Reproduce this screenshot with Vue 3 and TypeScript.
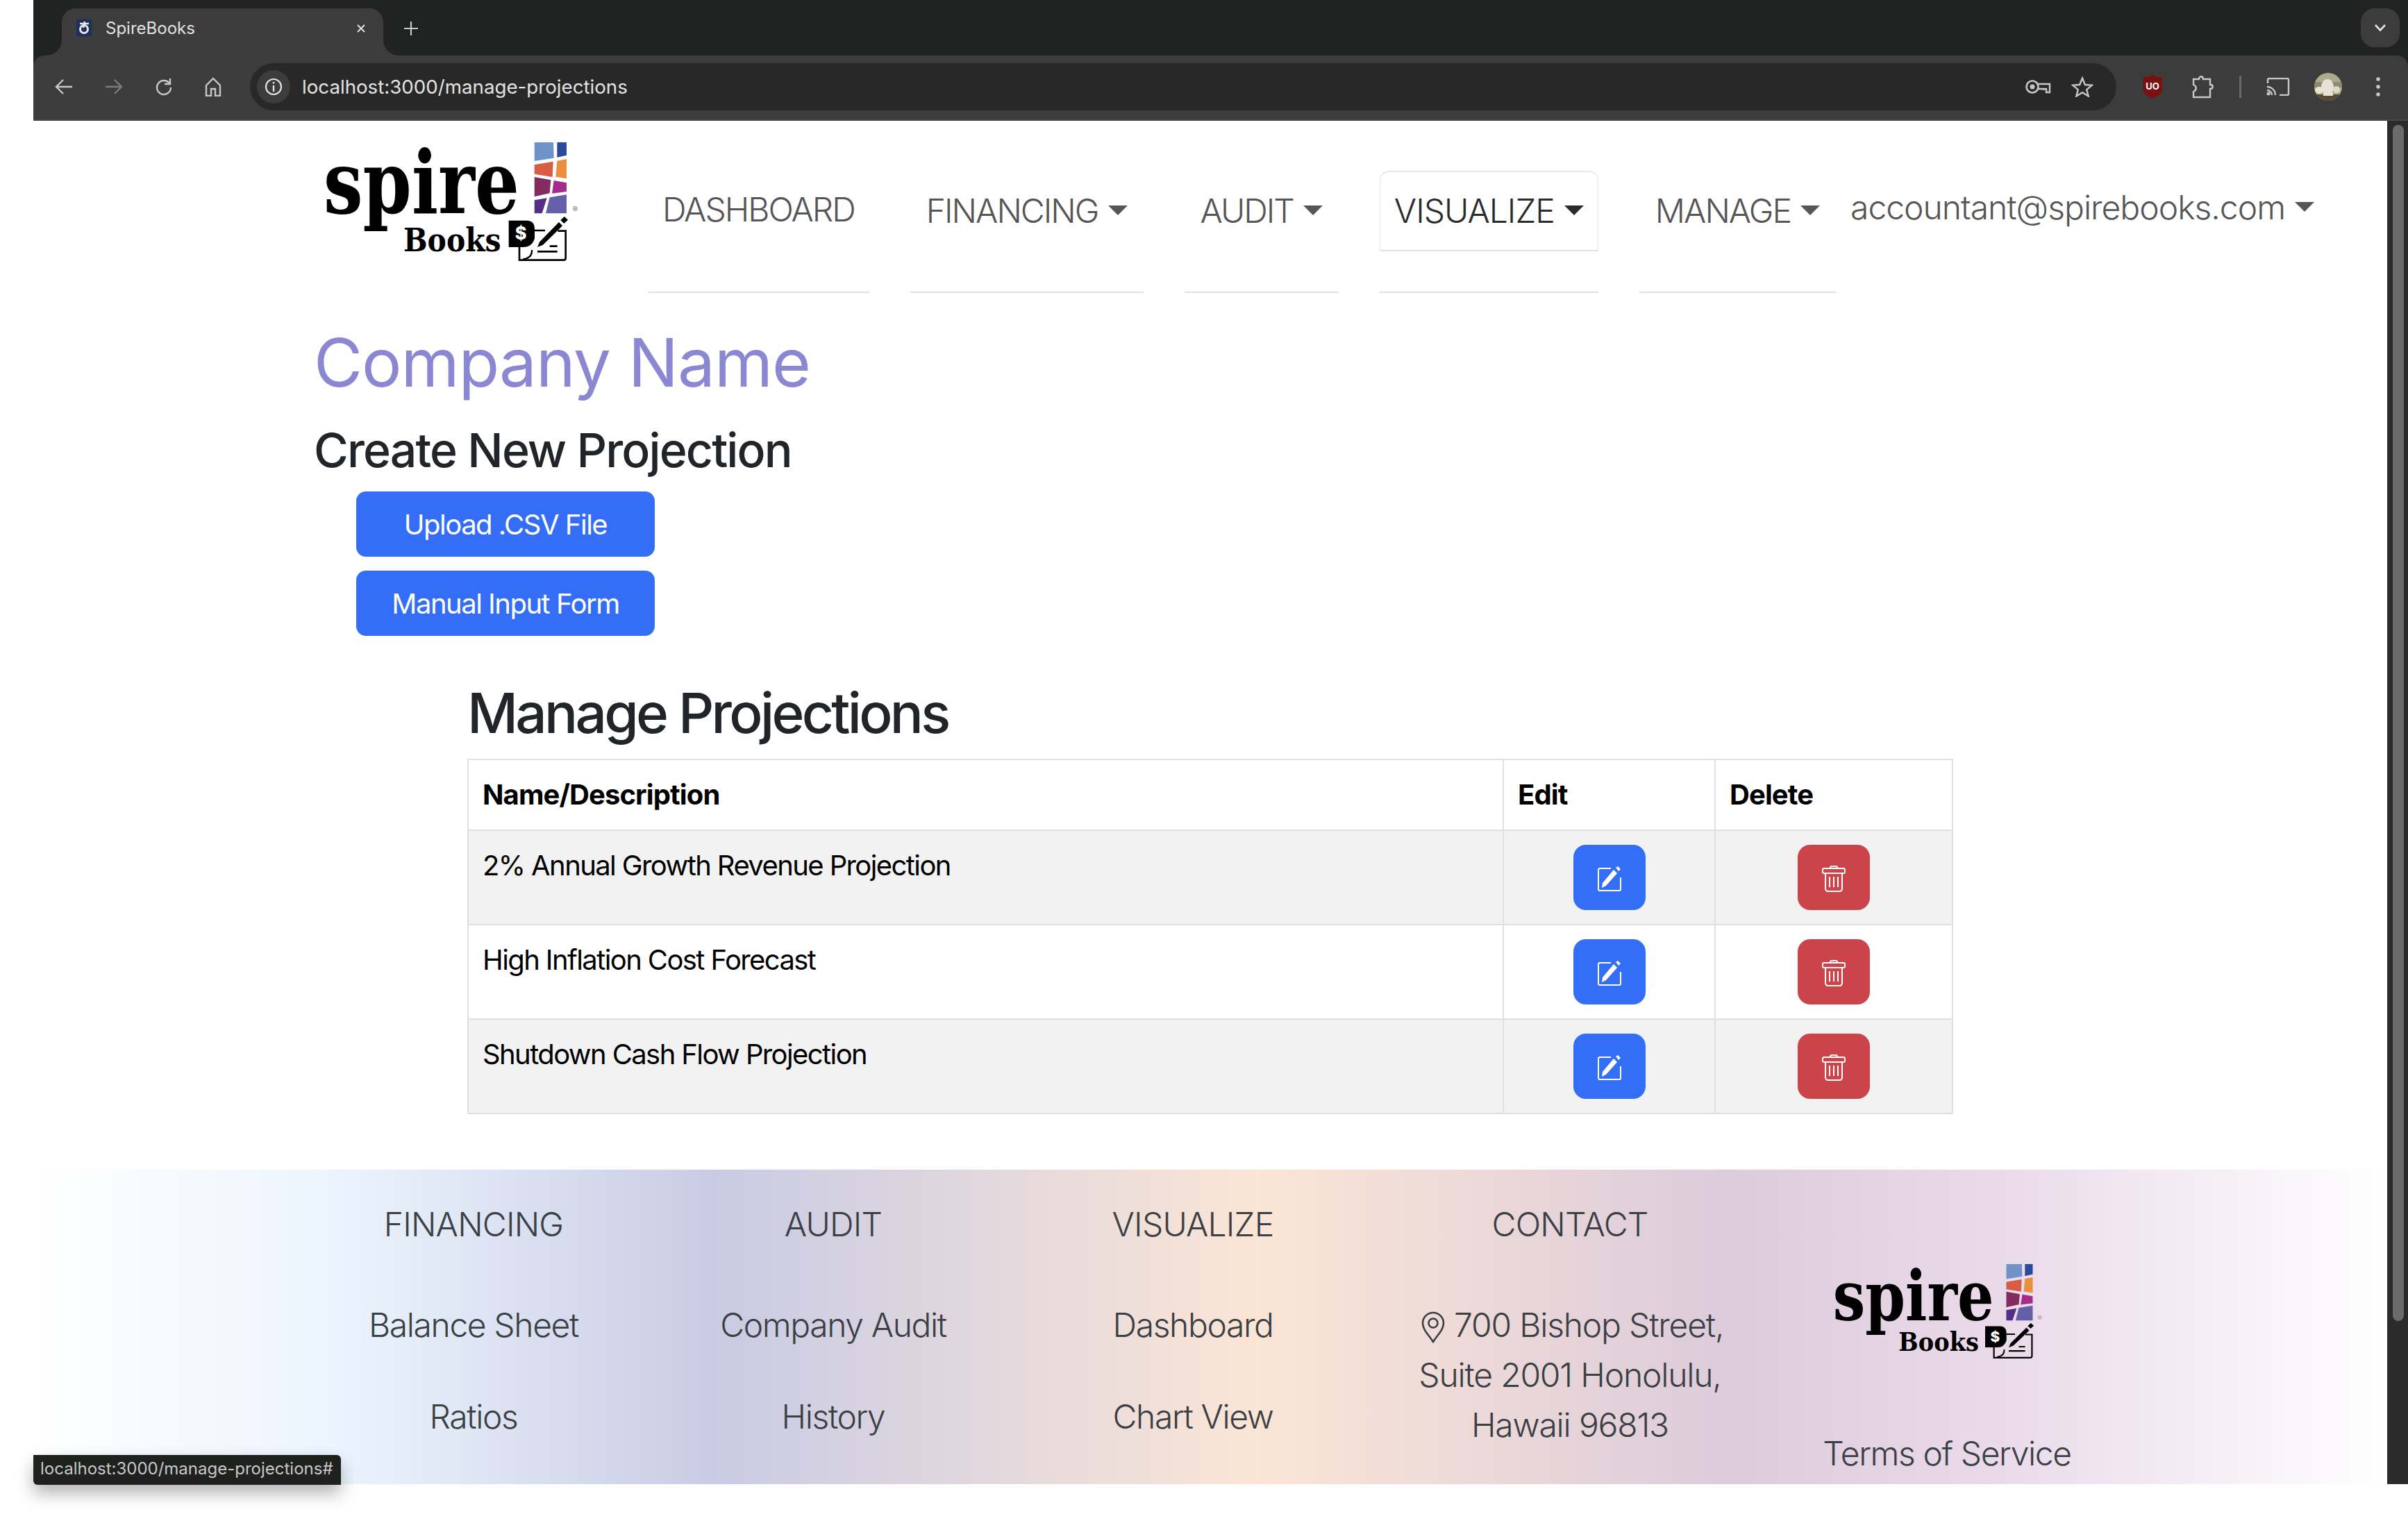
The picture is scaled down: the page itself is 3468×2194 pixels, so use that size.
<script setup lang="ts">

interface Tile {
    points: string
    fill: string
}

interface Projection {
    name: string
}

interface NavItem {
    label: string
    caret: boolean
    active: boolean
}

interface FooterCol {
    title: string
    links: string[]
}

const tiles : Tile[] = [
    { points: '1049,75 1131,75 1133,143 1049,156', fill: '#6f93c8' },
    { points: '1147,75 1188,75 1188,131 1147,140', fill: '#2b4a9e' },
    { points: '1049,172 1130,158 1127,225 1049,212', fill: '#d95c45' },
    { points: '1147,155 1188,148 1188,232 1141,224', fill: '#ea8f3d' },
    { points: '1049,225 1120,238 1115,295 1049,310', fill: '#832b60' },
    { points: '1133,240 1188,250 1188,288 1125,296', fill: '#a52c8c' },
    { points: '1049,325 1103,316 1082,382 1049,382', fill: '#562f82' },
    { points: '1115,313 1188,301 1188,382 1098,382', fill: '#6460a8' }
]

const navItems : NavItem[] = [
    { label: 'DASHBOARD', caret: false, active: false },
    { label: 'FINANCING', caret: true, active: false },
    { label: 'AUDIT', caret: true, active: false },
    { label: 'VISUALIZE', caret: true, active: true },
    { label: 'MANAGE', caret: true, active: false }
]

const projections : Projection[] = [
    { name: '2% Annual Growth Revenue Projection' },
    { name: 'High Inflation Cost Forecast' },
    { name: 'Shutdown Cash Flow Projection' }
]

const footerCols : FooterCol[] = [
    { title: 'FINANCING', links: ['Balance Sheet', 'Ratios'] },
    { title: 'AUDIT', links: ['Company Audit', 'History'] },
    { title: 'VISUALIZE', links: ['Dashboard', 'Chart View'] }
]

</script>

<template>
    <div class="screen">
        <div class="gutter"></div>
        <div class="browser">
            <div class="tabstrip">
                <div class="tab">
                    <svg class="favicon" width="22" height="24" viewBox="0 0 22 24">
                        <rect width="22" height="24" fill="#1d2f5e" />
                        <circle cx="11" cy="14" r="5.5" fill="none" stroke="#e8e8e8" stroke-width="3" />
                        <path d="M5 6 H18 M12 3 L10 12" stroke="#e8e8e8" stroke-width="2.5" fill="none" />
                    </svg>
                    <span class="tab-title">SpireBooks</span>
                    <svg class="tab-close" width="16" height="16" viewBox="0 0 16 16">
                        <path d="M3 3 L13 13 M13 3 L3 13" stroke="#e3e3e3" stroke-width="2" />
                    </svg>
                </div>
                <svg class="new-tab" width="22" height="22" viewBox="0 0 22 22">
                    <path d="M11 1 V21 M1 11 H21" stroke="#c7c7c7" stroke-width="2.2" />
                </svg>
                <div class="tab-menu">
                    <svg width="18" height="12" viewBox="0 0 18 12">
                        <path d="M2 2 L9 9.5 L16 2" stroke="#e3e3e3" stroke-width="2.6" fill="none" />
                    </svg>
                </div>
            </div>

            <div class="toolbar">
                <div class="nav-icons">
                    <svg width="26" height="24" viewBox="0 0 26 24">
                        <path d="M25 12 H3 M12 2 L2 12 L12 22" stroke="#c7c7c7" stroke-width="2.4" fill="none" />
                    </svg>
                    <svg width="26" height="24" viewBox="0 0 26 24">
                        <path d="M1 12 H23 M14 2 L24 12 L14 22" stroke="#7c7c7c" stroke-width="2.4" fill="none" />
                    </svg>
                    <svg width="26" height="26" viewBox="0 0 26 26">
                        <path d="M21 8 A10 10 0 1 0 23 14" stroke="#c7c7c7" stroke-width="2.4" fill="none" />
                        <path d="M22 1 V9 H14" stroke="#c7c7c7" stroke-width="2.4" fill="none" />
                    </svg>
                    <svg width="24" height="28" viewBox="0 0 24 28">
                        <path d="M2 12 L12 2 L22 12 V27 H15 V17 H9 V27 H2 Z" stroke="#c7c7c7" stroke-width="2.4" fill="none" />
                    </svg>
                </div>
                <div class="omnibox">
                    <div class="info-badge">
                        <svg width="26" height="26" viewBox="0 0 26 26">
                            <circle cx="13" cy="13" r="11" stroke="#e3e3e3" stroke-width="2.2" fill="none" />
                            <path d="M13 11 V20 M13 6 V8.5" stroke="#e3e3e3" stroke-width="2.4" />
                        </svg>
                    </div>
                    <span class="url">localhost:3000/manage-projections</span>
                    <svg class="omni-key" width="38" height="22" viewBox="0 0 38 22">
                        <circle cx="11" cy="11" r="8.5" stroke="#c7c7c7" stroke-width="2.6" fill="none" />
                        <circle cx="11" cy="11" r="3.5" fill="#c7c7c7" />
                        <path d="M19 7 H36 V19 H31 V14 H27 V16 M19 14 H27" stroke="#c7c7c7" stroke-width="2.4" fill="none" />
                    </svg>
                    <svg class="omni-star" width="32" height="30" viewBox="0 0 32 30">
                        <path d="M16 2.5 L19.8 12 L30 12.7 L22.2 19.2 L24.7 28.5 L16 23.2 L7.3 28.5 L9.8 19.2 L2 12.7 L12.2 12 Z" stroke="#c7c7c7" stroke-width="2.4" fill="none" />
                    </svg>
                </div>
                <div class="ext-icons">
                    <svg class="ext-ublock" width="30" height="34" viewBox="0 0 30 34">
                        <path d="M15 0 L22 3 L29 3 V20 C29 27 20 32 15 34 C10 32 1 27 1 20 V3 L8 3 Z" fill="#7a1010" />
                        <text x="15" y="21" text-anchor="middle" class="ublock-text">UO</text>
                    </svg>
                    <svg class="ext-puzzle" width="32" height="34" viewBox="0 0 32 34">
                        <path d="M3 6 H11 C11 1 17 1 17 6 H27 V14 C32 14 32 20 27 20 V32 H3 V24 C8 22 8 16 3 14 Z" stroke="#c7c7c7" stroke-width="2.4" fill="none" />
                    </svg>
                    <div class="ext-sep"></div>
                    <svg class="ext-cast" width="34" height="26" viewBox="0 0 34 26">
                        <path d="M2 8 V3 Q2 1 4 1 H30 Q32 1 32 3 V23 Q32 25 30 25 H19" stroke="#c7c7c7" stroke-width="2.4" fill="none" />
                        <path d="M1 13 A12 12 0 0 1 13 25 M1 18 A7 7 0 0 1 8 25" stroke="#c7c7c7" stroke-width="2.4" fill="none" />
                        <circle cx="3" cy="23" r="2.5" fill="#c7c7c7" />
                    </svg>
                    <svg class="ext-avatar" width="40" height="40" viewBox="0 0 40 40">
                        <clipPath id="avatar-clip"><circle cx="20" cy="20" r="20" /></clipPath>
                        <g clip-path="url(#avatar-clip)">
                            <rect width="40" height="40" fill="#aeaa8e" />
                            <rect y="13" width="40" height="8" fill="#8f8a6c" />
                            <rect y="31" width="40" height="9" fill="#5c4a33" />
                            <ellipse cx="19" cy="20" rx="9" ry="11" fill="#e6e3d6" />
                            <ellipse cx="7" cy="25" rx="6" ry="5" fill="#e6e3d6" />
                            <ellipse cx="32" cy="24" rx="5" ry="5" fill="#dcd9ca" />
                            <rect x="13" y="28" width="14" height="5" fill="#e6e3d6" />
                        </g>
                    </svg>
                    <svg class="ext-kebab" width="8" height="30" viewBox="0 0 8 30">
                        <circle cx="4" cy="4" r="2.8" fill="#c7c7c7" />
                        <circle cx="4" cy="15" r="2.8" fill="#c7c7c7" />
                        <circle cx="4" cy="26" r="2.8" fill="#c7c7c7" />
                    </svg>
                </div>
            </div>

            <div class="viewport">
                <div class="page">
                    <header class="site-header">
                        <svg class="logo" viewBox="0 0 1500 720" preserveAspectRatio="none">
                            <polygon v-for="t in tiles" :key="t.points" :points="t.points" :fill="t.fill" />
                            <text x="1225" y="379" text-anchor="middle" class="logo-reg">®</text>
                            <text x="138" y="380" textLength="846" lengthAdjust="spacingAndGlyphs" class="logo-spire">spire</text>
                            <text x="483" y="547" textLength="422" lengthAdjust="spacingAndGlyphs" class="logo-books">Books</text>
                            <path d="M938 413 H1015 Q1050 413 1050 450 V490 Q1040 528 1000 528 H938 Z" fill="#000" />
                            <text x="990" y="496" text-anchor="middle" class="logo-dollar">$</text>
                            <path d="M984 528 V584 H1175 Q1184 584 1184 575 V458 H1150 M1050 456 H1095" stroke="#000" stroke-width="8" fill="none" />
                            <path d="M1000 580 Q1040 575 1038 540" stroke="#000" stroke-width="7" fill="none" />
                            <path d="M1062 547 H1148 M1115 524 H1148" stroke="#000" stroke-width="8" fill="none" />
                            <path d="M1062 528 L1072 505 L1155 420 L1170 436 L1086 518 Z" fill="#000" />
                            <path d="M1162 412 L1178 396 L1194 410 L1177 426 Z" fill="#000" />
                        </svg>
                        <nav class="main-nav">
                            <div v-for="item in navItems" :key="item.label" class="nav-item">
                                <a href="#" :class="{ 'nav-link': true, active: item.active, plain: !item.caret }">
                                    {{ item.label }}<span v-if="item.caret" class="caret"></span>
                                </a>
                            </div>
                            <a href="#" class="user-link">accountant@spirebooks.com<span class="caret"></span></a>
                        </nav>
                    </header>

                    <section class="create">
                        <h1>Company Name</h1>
                        <h3>Create New Projection</h3>
                        <button class="btn-main">Upload .CSV File</button>
                        <button class="btn-main">Manual Input Form</button>
                    </section>

                    <section class="manage">
                        <h2>Manage Projections</h2>
                        <table>
                            <colgroup>
                                <col class="col-name" />
                                <col class="col-edit" />
                                <col class="col-delete" />
                            </colgroup>
                            <thead>
                                <tr>
                                    <th>Name/Description</th>
                                    <th>Edit</th>
                                    <th>Delete</th>
                                </tr>
                            </thead>
                            <tbody>
                                <tr v-for="p in projections" :key="p.name">
                                    <td>{{ p.name }}</td>
                                    <td class="action">
                                        <button class="btn-icon btn-edit">
                                            <svg width="36" height="38" viewBox="0 0 36 38">
                                                <path d="M20 4 H4 Q2 4 2 6 V34 Q2 36 4 36 H32 Q34 36 34 34 V17" stroke="#fff" stroke-width="2" fill="none" />
                                                <path d="M7 32 L8 25 L24 6 L29 11 L13 29 Z" fill="#fff" />
                                                <path d="M27 3 L30 1 L34 5 L31 8 Z" fill="#fff" />
                                            </svg>
                                        </button>
                                    </td>
                                    <td class="action">
                                        <button class="btn-icon btn-delete">
                                            <svg width="34" height="38" viewBox="0 0 34 38">
                                                <path d="M12 4 V3 Q12 1 14 1 H20 Q22 1 22 3 V4" stroke="#fff" stroke-width="2" fill="none" />
                                                <rect x="1" y="4" width="32" height="7" rx="2" stroke="#fff" stroke-width="2" fill="none" />
                                                <path d="M5 11 V33 Q5 37 9 37 H25 Q29 37 29 33 V11" stroke="#fff" stroke-width="2" fill="none" />
                                                <path d="M11 16 V31 M17 16 V31 M23 16 V31" stroke="#fff" stroke-width="2" />
                                            </svg>
                                        </button>
                                    </td>
                                </tr>
                            </tbody>
                        </table>
                    </section>

                    <footer class="site-footer">
                        <div class="footer-grid">
                            <div v-for="col in footerCols" :key="col.title" class="footer-col">
                                <div class="footer-title">{{ col.title }}</div>
                                <a v-for="l in col.links" :key="l" href="#" class="footer-link">{{ l }}</a>
                            </div>
                            <div class="footer-col">
                                <div class="footer-title">CONTACT</div>
                                <div class="contact">
                                    <svg class="pin" width="36" height="46" viewBox="0 0 36 46">
                                        <path d="M18 44 C10 32 3 26 3 17 A15 15 0 0 1 33 17 C33 26 26 32 18 44 Z" stroke="#3b4045" stroke-width="2.6" fill="none" />
                                        <circle cx="18" cy="17" r="6.5" stroke="#3b4045" stroke-width="2.6" fill="none" />
                                    </svg>
                                    700 Bishop Street,<br />Suite 2001 Honolulu,<br />Hawaii 96813
                                </div>
                            </div>
                            <div class="footer-col">
                                <svg class="logo-small" viewBox="0 0 1500 720" preserveAspectRatio="none">
                                    <polygon v-for="t in tiles" :key="t.points" :points="t.points" :fill="t.fill" />
                                    <text x="1225" y="379" text-anchor="middle" class="logo-reg">®</text>
                                    <text x="138" y="380" textLength="846" lengthAdjust="spacingAndGlyphs" class="logo-spire">spire</text>
                                    <text x="483" y="547" textLength="422" lengthAdjust="spacingAndGlyphs" class="logo-books">Books</text>
                                    <path d="M938 413 H1015 Q1050 413 1050 450 V490 Q1040 528 1000 528 H938 Z" fill="#000" />
                                    <text x="990" y="496" text-anchor="middle" class="logo-dollar">$</text>
                                    <path d="M984 528 V584 H1175 Q1184 584 1184 575 V458 H1150 M1050 456 H1095" stroke="#000" stroke-width="8" fill="none" />
                                    <path d="M1000 580 Q1040 575 1038 540" stroke="#000" stroke-width="7" fill="none" />
                                    <path d="M1062 547 H1148 M1115 524 H1148" stroke="#000" stroke-width="8" fill="none" />
                                    <path d="M1062 528 L1072 505 L1155 420 L1170 436 L1086 518 Z" fill="#000" />
                                    <path d="M1162 412 L1178 396 L1194 410 L1177 426 Z" fill="#000" />
                                </svg>
                                <a href="#" class="footer-link terms">Terms of Service</a>
                            </div>
                        </div>
                    </footer>
                </div>
                <div class="scrollbar"><div class="thumb"></div></div>
            </div>

            <div class="status-bubble">localhost:3000/manage-projections#</div>
        </div>
    </div>
</template>

<style>
html, body {
    margin: 0;
    background: #fff;
}
</style>

<style scoped>

.screen {
    display: flex;
    width: 3468px;
    height: 2194px;
    background: #fff;
    overflow: hidden;
    font-family: Inter, "Liberation Sans", sans-serif;
}

.gutter {
    width: 48px;
    flex: none;
}

.browser {
    position: relative;
    flex: 1;
    height: 2138px;
    display: flex;
    flex-direction: column;
    background: #212322;
}

/* browser chrome */

.tabstrip {
    height: 80px;
    flex: none;
    display: flex;
    align-items: flex-end;
    padding-left: 41px;
}

.tab {
    position: relative;
    width: 463px;
    height: 68px;
    display: flex;
    align-items: flex-start;
    padding-top: 16px;
    box-sizing: border-box;
    background: #3c3c3c;
    border-radius: 20px 20px 0 0;
}

.tab::before,
.tab::after {
    content: "";
    position: absolute;
    bottom: 0;
    width: 22px;
    height: 22px;
}

.tab::before {
    left: -22px;
    background: radial-gradient(circle at 0 0, transparent 21.5px, #3c3c3c 22px);
}

.tab::after {
    right: -22px;
    background: radial-gradient(circle at 100% 0, transparent 21.5px, #3c3c3c 22px);
}

.favicon {
    flex: none;
    margin-left: 21px;
}

.tab-title {
    flex: none;
    margin-left: 20px;
    width: 360px;
    color: #e3e3e3;
    font-size: 24px;
    line-height: 26px;
}

.tab-close {
    flex: none;
    margin-top: 5px;
}

.new-tab {
    margin-left: 29px;
    margin-bottom: 28px;
}

.tab-menu {
    margin-left: auto;
    margin-right: 12px;
    margin-bottom: 12px;
    width: 56px;
    height: 56px;
    border-radius: 20px;
    background: #3c3c3c;
    display: flex;
    align-items: center;
    justify-content: center;
}

.toolbar {
    height: 94px;
    flex: none;
    display: flex;
    align-items: center;
    box-sizing: border-box;
    padding-bottom: 2px;
    background: #3c3c3c;
    border-bottom: 2px solid #474747;
    border-radius: 16px 16px 0 0;
}

.nav-icons {
    width: 312px;
    flex: none;
    display: flex;
    align-items: center;
    gap: 46px;
    padding-left: 31px;
    box-sizing: border-box;
}

.omnibox {
    width: 2688px;
    height: 68px;
    flex: none;
    display: flex;
    align-items: center;
    background: #282828;
    border-radius: 34px;
}

.info-badge {
    width: 48px;
    height: 48px;
    margin-left: 10px;
    border-radius: 50%;
    background: #3c3c3c;
    display: flex;
    align-items: center;
    justify-content: center;
}

.url {
    margin-left: 17px;
    color: #e3e3e3;
    font-size: 27.7px;
}

.omni-key {
    margin-left: auto;
}

.omni-star {
    margin-left: 29px;
    margin-right: 33px;
}

.ext-icons {
    flex: 1;
    display: flex;
    align-items: center;
}

.ext-ublock {
    margin-left: 37px;
}

.ublock-text {
    fill: #fff;
    font-size: 13px;
    font-weight: 700;
    font-family: Inter, sans-serif;
}

.ext-puzzle {
    margin-left: 41px;
}

.ext-sep {
    width: 3px;
    height: 32px;
    margin-left: 37px;
    background: #6a6a6a;
}

.ext-cast {
    margin-left: 36px;
}

.ext-avatar {
    margin-left: 35px;
}

.ext-kebab {
    margin-left: 48px;
}

.viewport {
    flex: 1;
    min-height: 0;
    display: flex;
}

.scrollbar {
    width: 30px;
    flex: none;
    background: #2b2b2b;
    padding: 6px 6px 0 8px;
    box-sizing: border-box;
}

.thumb {
    height: 1723px;
    background: #6b6b6b;
    border-radius: 8px;
}

.status-bubble {
    position: absolute;
    left: 0;
    bottom: -1px;
    width: 443px;
    height: 43px;
    box-sizing: border-box;
    padding-left: 10px;
    line-height: 40px;
    font-size: 24px;
    color: #c8c8c8;
    background: #1f211f;
    border-radius: 0 6px 0 6px;
    box-shadow: 0 12px 24px rgba(0, 0, 0, 0.3);
}

/* page */

.page {
    flex: 1;
    min-width: 0;
    background: #fff;
    overflow: hidden;
    display: flex;
    flex-direction: column;
}

.site-header {
    width: 2640px;
    margin: 0 auto;
    display: flex;
    flex: none;
}

.logo {
    width: 500px;
    height: 240px;
    flex: none;
    margin-top: 6px;
    margin-left: -3px;
}

.logo-spire {
    font-family: "DejaVu Serif", serif;
    font-weight: 700;
    font-size: 376px;
    fill: #000;
}

.logo-books {
    font-family: "DejaVu Serif", serif;
    font-weight: 700;
    font-size: 140px;
    fill: #000;
}

.logo-dollar {
    font-family: Inter, sans-serif;
    font-weight: 800;
    font-size: 76px;
    fill: #fff;
}

.logo-reg {
    font-family: Inter, sans-serif;
    font-size: 34px;
    fill: #777;
}

.main-nav {
    display: flex;
    align-items: flex-start;
    margin-top: 72px;
    margin-left: 13px;
    font-size: 48px;
    font-weight: 300;
}

.nav-item {
    margin-right: 59px;
    border-bottom: 2px solid #dee2e6;
    padding-bottom: 58px;
}

.nav-item:last-of-type {
    margin-right: 0;
}

.nav-link {
    display: block;
    height: 116px;
    box-sizing: border-box;
    padding: 20px 22px 0;
    line-height: 72px;
    letter-spacing: -2px;
    color: #565656;
    text-decoration: none;
    white-space: nowrap;
    border: 2px solid transparent;
    border-width: 2px 1px;
    border-radius: 14px 14px 0 0;
}

.nav-link.plain {
    padding: 18px 20px 0;
}

.nav-link.active {
    padding: 20px 20px 0;
    letter-spacing: -1px;
    color: #2b2b2b;
    border-color: #e6e8ee;
    border-bottom-color: #dee2e6;
}

.caret {
    display: inline-block;
    margin-left: 14px;
    vertical-align: 11px;
    border-top: 14.4px solid currentColor;
    border-left: 14.4px solid transparent;
    border-right: 14.4px solid transparent;
}

.user-link {
    margin-left: 21px;
    padding-top: 17px;
    line-height: 72px;
    letter-spacing: -1px;
    color: #565656;
    text-decoration: none;
    white-space: nowrap;
}

.create {
    flex: none;
    width: 2640px;
    margin: 43px auto 0;
    padding-left: 29px;
    box-sizing: border-box;
}

h1 {
    margin: 0 0 27px;
    font-size: 96px;
    line-height: 115px;
    font-weight: 400;
    letter-spacing: -1.1px;
    color: #8b87d2;
}

h3 {
    margin: 0 0 19px;
    font-size: 68px;
    line-height: 82px;
    font-weight: 500;
    letter-spacing: -1.9px;
    color: #212529;
}

.btn-main {
    display: block;
    width: 430px;
    height: 94px;
    margin: 0 0 20px 61px;
    border: none;
    border-radius: 14px;
    background: #346ef6;
    color: #fff;
    font-family: inherit;
    font-size: 40px;
    letter-spacing: -1.5px;
}

.manage {
    flex: none;
    width: 2140px;
    margin: 43px auto 0;
}

h2 {
    margin: 0 0 18px;
    font-size: 80px;
    line-height: 96px;
    font-weight: 500;
    letter-spacing: -3.7px;
    color: #212529;
}

table {
    width: 2138px;
    border-collapse: collapse;
    table-layout: fixed;
    color: #000;
    font-size: 40px;
    line-height: 60px;
    letter-spacing: -1.6px;
}

.col-name {
    width: 1491px;
}

.col-edit {
    width: 305px;
}

.col-delete {
    width: 342px;
}

th,
td {
    border: 2px solid #dee2e6;
    padding: 20px;
    text-align: left;
    vertical-align: top;
}

th {
    font-weight: 700;
    letter-spacing: -0.9px;
}

tbody tr:nth-child(odd) td {
    background: #f2f2f2;
}

td.action {
    text-align: center;
}

.btn-icon {
    display: inline-flex;
    align-items: center;
    justify-content: center;
    vertical-align: top;
    width: 104px;
    height: 94px;
    border: none;
    border-radius: 18px;
    padding: 4px 0 0;
}

.btn-edit {
    background: #346ef6;
}

.btn-delete {
    background: #cb444a;
}

.site-footer {
    flex: none;
    height: 454px;
    margin-top: 80px;
    overflow: hidden;
    background: linear-gradient(90deg, #fff 0%, #ebf4fd 13%, #c9cbe4 29%, #fbe5d6 52%, #dccbdb 72%, #e9d9e9 83%, #fff 100%);
}

.footer-grid {
    width: 2640px;
    margin: 0 auto;
    padding-top: 43px;
    display: grid;
    grid-template-columns: 518px 518px 518px 568px 518px;
    font-size: 48px;
    font-weight: 300;
    line-height: 72px;
    color: #3b4045;
    text-align: center;
}

.footer-col {
    display: flex;
    flex-direction: column;
    align-items: center;
}

.footer-title {
    margin-bottom: 73px;
    letter-spacing: -0.8px;
}

.footer-link {
    margin-bottom: 60px;
    letter-spacing: -1.4px;
    color: inherit;
    text-decoration: none;
    white-space: nowrap;
}

.contact {
    white-space: nowrap;
    letter-spacing: -1.2px;
}

.pin {
    vertical-align: -9px;
    margin-left: 6px;
    margin-right: 0;
}

.logo-small {
    width: 411px;
    height: 191px;
    flex: none;
    margin-top: 73px;
    margin-left: 6px;
}

.terms {
    margin-top: 66px;
}

</style>
